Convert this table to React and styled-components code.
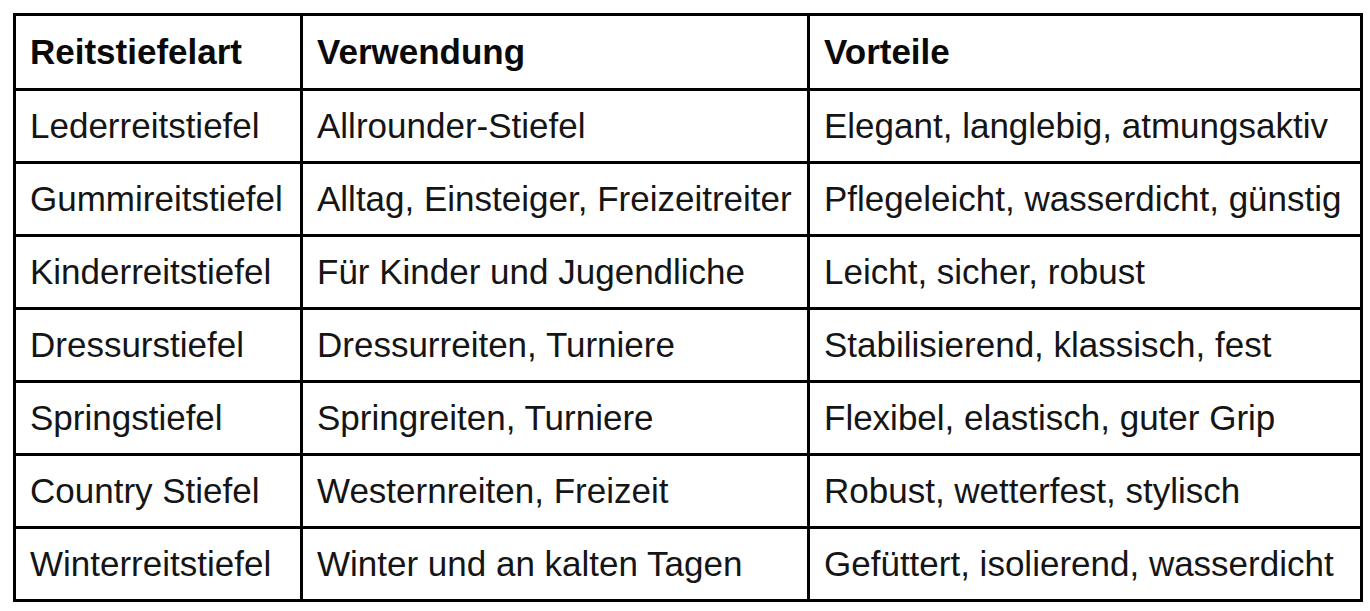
import React from 'react';
import styled, { createGlobalStyle } from 'styled-components';

const GlobalStyle = createGlobalStyle`
    html, body {
        margin: 0;
        padding: 0;
        background: #ffffff;
    }
    body {
        font-family: "Liberation Sans", Arial, sans-serif;
        color: #111111;
    }
`;

const Page = styled.div`
    padding: 13px 0 0 13px;
`;

const Table = styled.table`
    border-collapse: collapse;
    table-layout: fixed;
    width: 1347px;
    border: 3px solid #000;
`;

const Col = styled.col`
    width: ${props => props.w}px;
`;

const HeadCell = styled.th`
    height: 72px;
    padding: 0 14px;
    border: 3px solid #000;
    text-align: left;
    font-size: 35px;
    font-weight: 700;
    white-space: nowrap;
    color: #0a0a0a;
`;

const Cell = styled.td`
    height: 70px;
    padding: 0 14px;
    border: 3px solid #000;
    font-size: 35px;
    font-weight: 400;
    white-space: nowrap;
    color: #151515;
`;

const rows = [
    ['Lederreitstiefel', 'Allrounder-Stiefel', 'Elegant, langlebig, atmungsaktiv'],
    ['Gummireitstiefel', 'Alltag, Einsteiger, Freizeitreiter', 'Pflegeleicht, wasserdicht, günstig'],
    ['Kinderreitstiefel', 'Für Kinder und Jugendliche', 'Leicht, sicher, robust'],
    ['Dressurstiefel', 'Dressurreiten, Turniere', 'Stabilisierend, klassisch, fest'],
    ['Springstiefel', 'Springreiten, Turniere', 'Flexibel, elastisch, guter Grip'],
    ['Country Stiefel', 'Westernreiten, Freizeit', 'Robust, wetterfest, stylisch'],
    ['Winterreitstiefel', 'Winter und an kalten Tagen', 'Gefüttert, isolierend, wasserdicht'],
];

function App() {
    return (
        <Page>
            <GlobalStyle />
            <Table>
                <colgroup>
                    <Col w={287} />
                    <Col w={507} />
                    <Col w={553} />
                </colgroup>
                <thead>
                    <tr>
                        <HeadCell>Reitstiefelart</HeadCell>
                        <HeadCell>Verwendung</HeadCell>
                        <HeadCell>Vorteile</HeadCell>
                    </tr>
                </thead>
                <tbody>
                    {rows.map(row => (
                        <tr key={row[0]}>
                            {row.map(text => <Cell key={text}>{text}</Cell>)}
                        </tr>
                    ))}
                </tbody>
            </Table>
        </Page>
    );
}

export default App;
